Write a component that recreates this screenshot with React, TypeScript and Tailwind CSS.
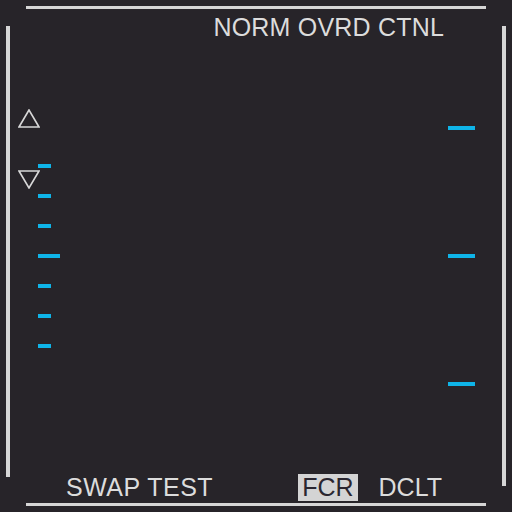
const leftTicks = [13, 13, 13, 22, 13, 13, 13];

function Triangle({ down }: { down?: boolean }) {
  return (
    <svg width="22" height="19" viewBox="0 0 22 19" className="block">
      <polygon
        points={down ? "1,1 21,1 11,18" : "11,1 1,18 21,18"}
        fill="none"
        stroke="#d8d8d8"
        strokeWidth="1.6"
        strokeLinejoin="miter"
      />
    </svg>
  );
}

export default function App() {
  return (
    <div className="flex h-[512px] w-[512px] flex-col bg-[#272429] font-['Liberation_Sans',Arial,sans-serif] text-[#dcdcdc]">
      {/* top rule */}
      <div className="ml-[26px] mt-[6px] h-[3px] w-[460px] bg-[#d6d6d6]" />

      <div className="flex flex-1">
        {/* left rule */}
        <div className="ml-[6px] mt-[17px] h-[451px] w-[4px] bg-[#d6d6d6]" />

        <div className="flex flex-1 flex-col">
          {/* header */}
          <div className="mt-[4px] flex justify-end pr-[58px] text-[25px] leading-[28px] tracking-[0.2px]">NORM OVRD CTNL</div>

          {/* scale area */}
          <div className="flex flex-1 justify-between">
            <div className="ml-[8px] flex">
              <div className="flex w-[22px] flex-col">
                <div className="mt-[68px]">
                  <Triangle />
                </div>
                <div className="mt-[42px]">
                  <Triangle down />
                </div>
              </div>
              <div className="-ml-[2px] mt-[123px] flex flex-col gap-[26px]">
                {leftTicks.map((w, i) => (
                  <div key={i} className="h-[4px] bg-[#0fb4e8]" style={{ width: w }} />
                ))}
              </div>
            </div>
            <div className="mr-[27px] mt-[85px] flex flex-col gap-[124px]">
              <div className="h-[4px] w-[27px] bg-[#0fb4e8]" />
              <div className="h-[4px] w-[27px] bg-[#0fb4e8]" />
              <div className="h-[4px] w-[27px] bg-[#0fb4e8]" />
            </div>
          </div>

          {/* bottom labels */}
          <div className="mb-[2px] flex h-[27px] items-center text-[25px] leading-[27px]">
            <span className="ml-[56px] tracking-[0.5px]">SWAP TEST</span>
            <span className="ml-[85px] bg-[#d4d4d4] px-[4px] text-[#2a2630]">FCR</span>
            <span className="ml-[21px]">DCLT</span>
          </div>
        </div>

        {/* right rule */}
        <div className="mr-[6px] mt-[17px] h-[460px] w-[4px] bg-[#d6d6d6]" />
      </div>

      {/* bottom rule */}
      <div className="mb-[6px] ml-[26px] h-[3px] w-[460px] bg-[#d6d6d6]" />
    </div>
  );
}
